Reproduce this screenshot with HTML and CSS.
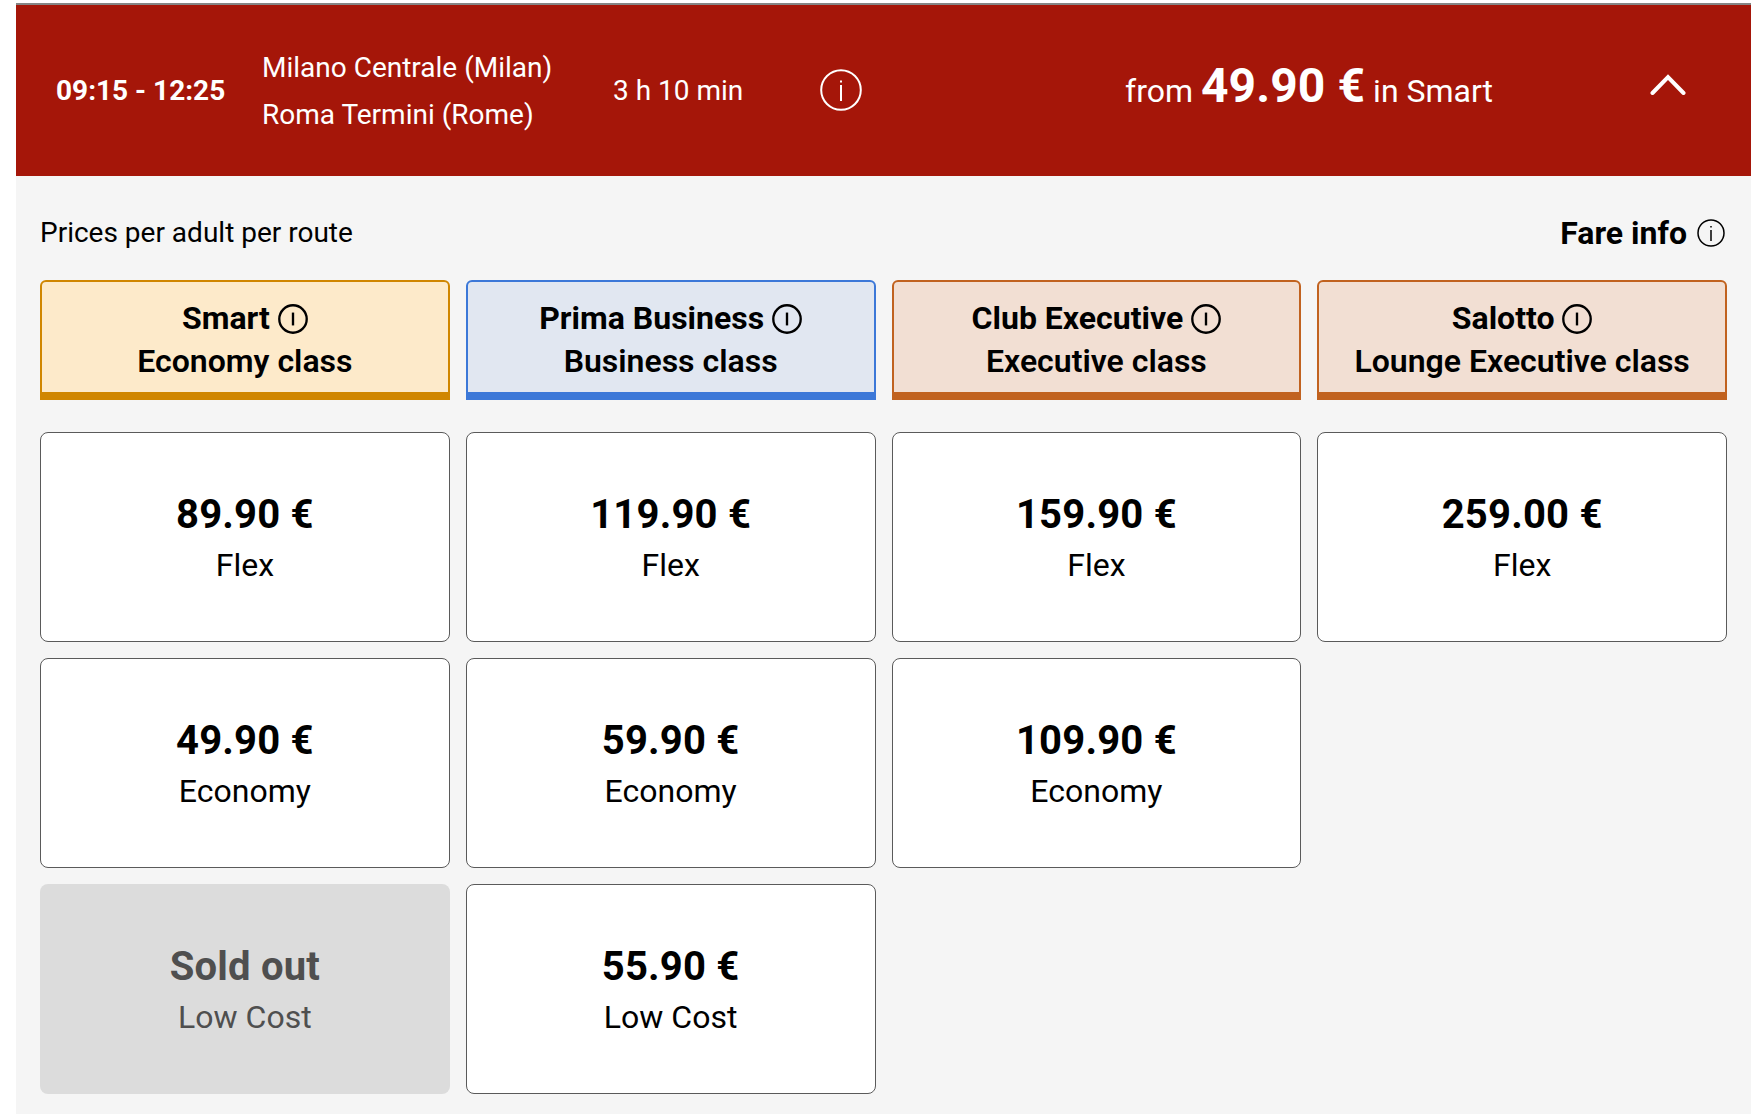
FILE: index.html
```html
<!DOCTYPE html>
<html lang="en">
<head>
    <meta charset="UTF-8">
    <meta name="viewport" content="width=device-width, initial-scale=1.0">
    <title>Train solution</title>
    <link rel="stylesheet" href="styles.css">
</head>
<body>
    <div class="panel">
        <header class="summary">
            <div class="times">09:15 - 12:25</div>
            <div class="route">
                <div>Milano Centrale (Milan)</div>
                <div>Roma Termini (Rome)</div>
            </div>
            <div class="duration">3 h 10 min</div>
            <svg class="info info-large" viewBox="0 0 42 42"><circle cx="21" cy="21" r="19.8"/><path d="M21 16v16M21 11.500v2"/></svg>
            <div class="from">from <strong>49.90 €</strong> in Smart</div>
            <svg class="chevron" viewBox="0 0 36 22"><path d="M2.500 20 18 4l15.500 16"/></svg>
        </header>

        <section class="content">
            <div class="top-row">
                <div>Prices per adult per route</div>
                <div class="fare-info">Fare info <svg class="info info-small" viewBox="0 0 28 28"><circle cx="14" cy="14" r="13"/><path d="M14 11v11M14 7v1.500"/></svg></div>
            </div>

            <div class="grid">
                <div class="head smart">
                    <div class="head-name">Smart <svg class="info info-head" viewBox="0 0 28 28"><circle cx="14" cy="14" r="12.800"/><path d="M14 8v12"/></svg></div>
                    <div>Economy class</div>
                </div>
                <div class="head business">
                    <div class="head-name">Prima Business <svg class="info info-head" viewBox="0 0 28 28"><circle cx="14" cy="14" r="12.800"/><path d="M14 8v12"/></svg></div>
                    <div>Business class</div>
                </div>
                <div class="head executive">
                    <div class="head-name">Club Executive <svg class="info info-head" viewBox="0 0 28 28"><circle cx="14" cy="14" r="12.800"/><path d="M14 8v12"/></svg></div>
                    <div>Executive class</div>
                </div>
                <div class="head executive">
                    <div class="head-name">Salotto <svg class="info info-head" viewBox="0 0 28 28"><circle cx="14" cy="14" r="12.800"/><path d="M14 8v12"/></svg></div>
                    <div>Lounge Executive class</div>
                </div>
            </div>

            <div class="grid cards">
                <div class="card"><div class="price">89.90 €</div><div class="fare">Flex</div></div>
                <div class="card"><div class="price">119.90 €</div><div class="fare">Flex</div></div>
                <div class="card"><div class="price">159.90 €</div><div class="fare">Flex</div></div>
                <div class="card"><div class="price">259.00 €</div><div class="fare">Flex</div></div>

                <div class="card"><div class="price">49.90 €</div><div class="fare">Economy</div></div>
                <div class="card"><div class="price">59.90 €</div><div class="fare">Economy</div></div>
                <div class="card"><div class="price">109.90 €</div><div class="fare">Economy</div></div>
                <div></div>

                <div class="card sold-out"><div class="price">Sold out</div><div class="fare">Low Cost</div></div>
                <div class="card"><div class="price">55.90 €</div><div class="fare">Low Cost</div></div>
            </div>
        </section>
    </div>
</body>
</html>
```

FILE: styles.css
```css
* {
    box-sizing: border-box;
}
body {
    margin: 0;
    background-color: white;
    color: black;
    font-family: Roboto, "Liberation Sans", sans-serif;
}
.panel {
    width: 1735px;
    height: 1114px;
    margin-left: 16px;
    padding-top: 3px;
    overflow: hidden;
}
.summary {
    display: flex;
    align-items: center;
    height: 173px;
    padding-left: 40px;
    border-top: 2px solid #858585;
    background-color: #a51609;
    color: white;
    font-size: 28px;
}
.times {
    width: 206px;
    font-size: 28px;
    font-weight: 700;
}
.route {
    width: 351px;
    line-height: 47px;
}
.duration {
    width: 207px;
}
.info {
    fill: none;
    stroke: currentColor;
}
.info-large {
    width: 42px;
    height: 42px;
    margin-top: -2px;
    stroke-width: 2;
}
.from {
    width: 0;
    flex: 1;
    margin-top: -11px;
    padding-left: 263px;
    font-size: 32px;
    white-space: nowrap;
}
.from strong {
    font-size: 48px;
    letter-spacing: 0.1px;
}
.chevron {
    width: 36px;
    height: 22px;
    margin: -14px 65px 0 122px;
    fill: none;
    stroke: white;
    stroke-width: 4;
    stroke-linecap: round;
}
.content {
    height: 938px;
    padding: 0 24px;
    background-color: #f5f5f5;
}
.top-row {
    display: flex;
    justify-content: space-between;
    align-items: center;
    height: 104px;
    padding-top: 9px;
    font-size: 28px;
}
.fare-info {
    display: flex;
    align-items: center;
    gap: 10px;
    padding-right: 2px;
    font-size: 32px;
    font-weight: 700;
}
.info-small {
    width: 28px;
    height: 28px;
    stroke-width: 1.500;
}
.grid {
    display: grid;
    grid-template-columns: repeat(4, 1fr);
    gap: 16px;
}
.cards {
    margin-top: 32px;
    grid-auto-rows: 210px;
}
.head {
    height: 120px;
    padding-top: 15px;
    border: 2px solid;
    border-bottom-width: 8px;
    border-radius: 6px 6px 0 0;
    font-size: 32px;
    font-weight: 600;
    line-height: 43px;
    text-align: center;
}
.head-name {
    font-weight: 700;
}
.info-head {
    width: 30px;
    height: 30px;
    vertical-align: -5px;
    stroke-width: 2.200;
}
.smart {
    background-color: #fdeaca;
    border-color: #d08600;
}
.business {
    background-color: #e1e7f1;
    border-color: #3c78d8;
}
.executive {
    background-color: #f2dfd3;
    border-color: #c1621f;
}
.card {
    display: flex;
    flex-direction: column;
    align-items: center;
    justify-content: center;
    padding-bottom: 1px;
    border: 1px solid #5a5a5a;
    border-radius: 8px;
    background-color: white;
    text-align: center;
}
.price {
    font-size: 40px;
    font-weight: 700;
    line-height: 52px;
    letter-spacing: 0.2px;
}
.fare {
    margin-top: 4px;
    font-size: 32px;
    line-height: 40px;
}
.sold-out {
    border: none;
    background-color: #dcdcdc;
    color: #4f4f4f;
}
```
